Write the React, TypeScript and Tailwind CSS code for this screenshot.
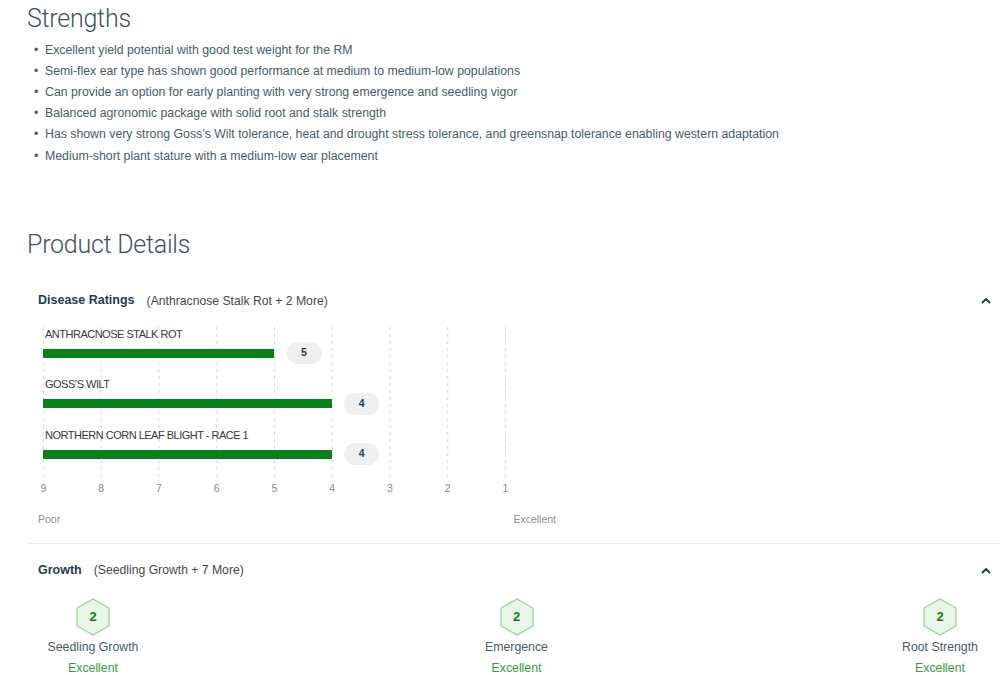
import React from "react";

const strengths = [
  "Excellent yield potential with good test weight for the RM",
  "Semi-flex ear type has shown good performance at medium to medium-low populations",
  "Can provide an option for early planting with very strong emergence and seedling vigor",
  "Balanced agronomic package with solid root and stalk strength",
  "Has shown very strong Goss\u2019s Wilt tolerance, heat and drought stress tolerance, and greensnap tolerance enabling western adaptation",
  "Medium-short plant stature with a medium-low ear placement",
];

const diseases = [
  { name: "ANTHRACNOSE STALK ROT", value: 5 },
  { name: "GOSS\u2019S WILT", value: 4 },
  { name: "NORTHERN CORN LEAF BLIGHT - RACE 1", value: 4 },
];

const growth = [
  { name: "Seedling Growth", value: 2, label: "Excellent" },
  { name: "Emergence", value: 2, label: "Excellent" },
  { name: "Root Strength", value: 2, label: "Excellent" },
];

const STEP = 57.75;

function Chevron() {
  return (
    <svg width="10" height="7" viewBox="0 0 10 7" className="block">
      <path d="M1.5 5.5 L5 2 L8.5 5.5" fill="none" stroke="#1f3d52" strokeWidth="1.8" strokeLinecap="round" strokeLinejoin="round" />
    </svg>
  );
}

function Hexagon({ value }: { value: number }) {
  return (
    <div className="relative w-[38px] h-[38px]">
      <svg width="38" height="38" viewBox="0 0 38 38" className="absolute inset-0">
        <polygon points="19,1 35,10 35,28 19,37 3,28 3,10" fill="#e7f6e7" stroke="#94d294" strokeWidth="1.2" />
      </svg>
      <span className="absolute inset-0 flex items-center justify-center text-[13px] font-bold text-[#137a22]">{value}</span>
    </div>
  );
}

export default function App() {
  return (
    <div className="w-[1000px] h-[675px] overflow-hidden bg-white pl-[27px] text-[#4a5b68]" style={{ fontFamily: '"Liberation Sans", Arial, sans-serif' }}>
      <h2 className="mt-[3px] text-[25px] leading-[32px] tracking-[-0.25px] font-light text-[#3f525f]" style={{ fontFamily: 'Roboto, "Liberation Sans", sans-serif' }}>
        Strengths
      </h2>
      <ul className="mt-[4.5px] pl-[7px]">
        {strengths.map((s) => (
          <li key={s} className="flex text-[12.3px] leading-[21.2px]">
            <span className="w-[11px] shrink-0">•</span>
            <span>{s}</span>
          </li>
        ))}
      </ul>

      <h2 className="mt-[62px] text-[25px] leading-[32px] tracking-[-0.25px] font-light text-[#3f525f]" style={{ fontFamily: 'Roboto, "Liberation Sans", sans-serif' }}>
        Product Details
      </h2>

      {/* Disease Ratings */}
      <div className="mt-[30px] pl-[11px] pr-[9px]">
        <div className="flex items-center h-[20px]">
          <span className="text-[12.5px] font-bold text-[#1f3d52]">Disease Ratings</span>
          <span className="ml-[12px] text-[12.2px] text-[#474747]">(Anthracnose Stalk Rot + 2 More)</span>
          <span className="ml-auto"><Chevron /></span>
        </div>

        <div className="mt-[16px] ml-[5px] relative w-[470px]">
          <svg className="absolute left-0 top-0" width="470" height="152">
            {Array.from({ length: 9 }).map((_, i) => (
              <line key={i} x1={0.5 + i * STEP} x2={0.5 + i * STEP} y1="0" y2="152" stroke="#d3d9df" strokeWidth="1" strokeDasharray="3 4" />
            ))}
          </svg>
          {diseases.map((d) => (
            <div key={d.name} className="relative h-[50.5px]">
              <div className="pl-[2px] h-[14px] text-[11px] leading-[14px] tracking-[-0.5px] text-[#383838]">{d.name}</div>
              <div className="mt-[1.5px] flex items-center h-[22px]">
                <div className="h-[9px] bg-[#0a7f1c]" style={{ width: `${(9 - d.value) * STEP}px` }} />
                <div className="ml-[12.5px] w-[35px] h-[22px] rounded-full bg-[#efefef] flex items-center justify-center text-[10.5px] font-bold text-[#1f3d52]">
                  {d.value}
                </div>
              </div>
            </div>
          ))}
          <div className="relative h-[14px] mt-[3px]">
            {[9, 8, 7, 6, 5, 4, 3, 2, 1].map((n, i) => (
              <span key={n} className="absolute top-0 w-[20px] -ml-[10px] text-center text-[10.5px] leading-[14px] text-[#8a8a8a]" style={{ left: `${0.5 + i * STEP}px` }}>
                {n}
              </span>
            ))}
          </div>
        </div>
        <div className="mt-[17px] w-[518px] flex justify-between text-[10.5px] leading-[14px] text-[#8f8f8f]">
          <span>Poor</span>
          <span>Excellent</span>
        </div>
      </div>

      <div className="mt-[17px] border-t border-[#ececec]" />

      {/* Growth */}
      <div className="pl-[11px] pr-[9px]">
        <div className="mt-[16px] flex items-center h-[20px]">
          <span className="text-[12.5px] font-bold text-[#1f3d52]">Growth</span>
          <span className="ml-[12px] text-[12.2px] text-[#474747]">(Seedling Growth + 7 More)</span>
          <span className="ml-auto"><Chevron /></span>
        </div>
        <div className="mt-[18px] flex justify-between w-[957px]">
          {growth.map((g) => (
            <div key={g.name} className="w-[110px] flex flex-col items-center">
              <Hexagon value={g.value} />
              <div className="mt-[1px] text-[12.3px] leading-[20px] text-[#4b5b67]">{g.name}</div>
              <div className="mt-[1px] text-[12.3px] leading-[20px] text-[#3a9a3d]">{g.label}</div>
            </div>
          ))}
        </div>
      </div>
    </div>
  );
}
